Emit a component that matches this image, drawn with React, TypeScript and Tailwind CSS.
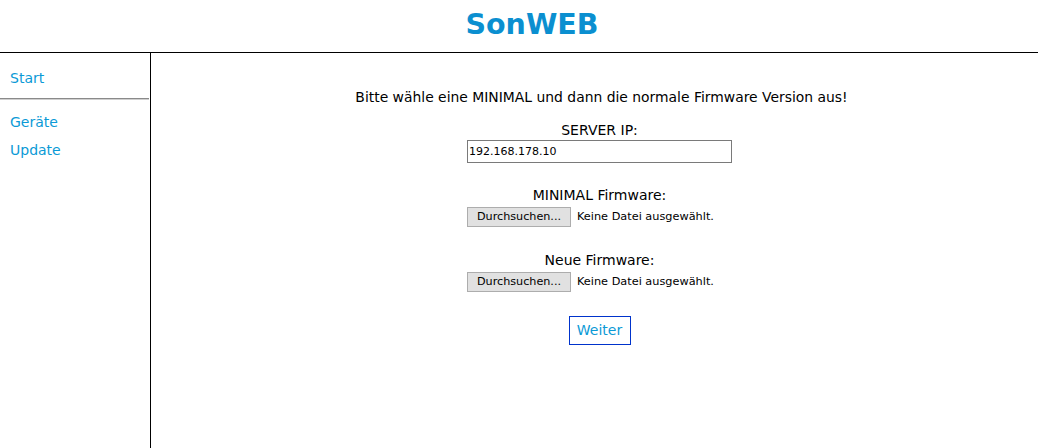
import React from "react";

const FileRow = () => (
  <div className="w-[265px] flex items-center justify-start gap-[6px]">
    <button className="h-[20px] w-[104px] border border-[#adadad] bg-[#e1e1e1] text-[11.2px] leading-none text-black">
      Durchsuchen...
    </button>
    <span className="text-[11.3px] text-black">Keine Datei ausgewählt.</span>
  </div>
);

export default function App() {
  return (
    <div className="h-[448px] w-[1038px] bg-white font-['DejaVu_Sans','Verdana',sans-serif] text-black flex flex-col overflow-hidden">
      <header className="h-[53px] border-b border-black flex items-center justify-center">
        <h1 className="ml-[26px] text-[28.5px] font-bold text-[#0b8fd0] leading-none mt-[-2px]">SonWEB</h1>
      </header>
      <div className="flex flex-1">
        <nav className="w-[151px] border-r border-black flex flex-col">
          <a className="block px-[10px] pt-[15px] pb-[9px] text-[14px] text-[#0b9ad6]">Start</a>
          <div className="h-[2px] bg-[#8a8a8a] mr-[1px] border-b border-[#cfcfcf]"></div>
          <a className="block px-[10px] mt-[12px] text-[14px] text-[#0b9ad6]">Geräte</a>
          <a className="block px-[10px] mt-[7px] text-[14px] text-[#0b9ad6]">Update</a>
        </nav>
        <main className="flex-1 pl-[10px] flex flex-col items-center text-[14px]">
          <p className="mt-[35px] ml-[4px] text-[13.9px] leading-[18px]">Bitte wähle eine MINIMAL und dann die normale Firmware Version aus!</p>
          <p className="mt-[15px] leading-[18px]">SERVER IP:</p>
          <input
            readOnly
            value="192.168.178.10"
            className="mt-[1px] h-[23px] w-[265px] border border-[#7a7a7a] px-[1px] text-[11px] outline-none"
          />
          <p className="mt-[23px] leading-[18px]">MINIMAL Firmware:</p>
          <div className="mt-[3px]"><FileRow /></div>
          <p className="mt-[24px] leading-[18px]">Neue Firmware:</p>
          <div className="mt-[3px]"><FileRow /></div>
          <button className="mt-[24px] h-[29px] w-[62px] border border-[#0033cc] text-[14px] text-[#0b9ad6] bg-white">
            Weiter
          </button>
        </main>
      </div>
    </div>
  );
}
